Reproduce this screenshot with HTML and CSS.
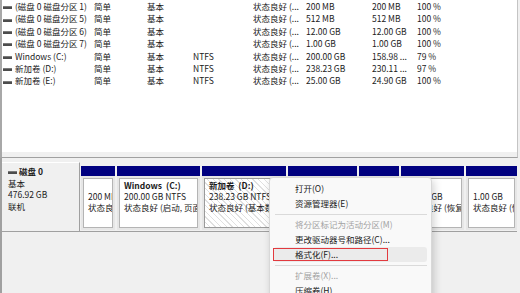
FILE: index.html
```
<!DOCTYPE html>
<html lang="zh-CN">
<head>
  <meta charset="UTF-8" />
  <title>磁盘管理</title>
  <link rel="stylesheet" href="styles.css">
</head>
<body>
  <div class="window">

    <!-- Volume list -->
    <div class="volume-list">
      <div class="rows">
        <div class="row"><span class="name"><i class="vol-icon"></i>(磁盘 0 磁盘分区 1)</span><span>简单</span><span>基本</span><span></span><span>状态良好 (...</span><span>200 MB</span><span>200 MB</span><span>100 %</span></div>
        <div class="row"><span class="name"><i class="vol-icon"></i>(磁盘 0 磁盘分区 5)</span><span>简单</span><span>基本</span><span></span><span>状态良好 (...</span><span>512 MB</span><span>512 MB</span><span>100 %</span></div>
        <div class="row"><span class="name"><i class="vol-icon"></i>(磁盘 0 磁盘分区 6)</span><span>简单</span><span>基本</span><span></span><span>状态良好 (...</span><span>12.00 GB</span><span>12.00 GB</span><span>100 %</span></div>
        <div class="row"><span class="name"><i class="vol-icon"></i>(磁盘 0 磁盘分区 7)</span><span>简单</span><span>基本</span><span></span><span>状态良好 (...</span><span>1.00 GB</span><span>1.00 GB</span><span>100 %</span></div>
        <div class="row"><span class="name"><i class="vol-icon"></i>Windows (C:)</span><span>简单</span><span>基本</span><span>NTFS</span><span>状态良好 (...</span><span>200.00 GB</span><span>158.98 ...</span><span>79 %</span></div>
        <div class="row"><span class="name"><i class="vol-icon"></i>新加卷 (D:)</span><span>简单</span><span>基本</span><span>NTFS</span><span>状态良好 (...</span><span>238.23 GB</span><span>230.11 ...</span><span>97 %</span></div>
        <div class="row"><span class="name"><i class="vol-icon"></i>新加卷 (E:)</span><span>简单</span><span>基本</span><span>NTFS</span><span>状态良好 (...</span><span>25.00 GB</span><span>24.90 GB</span><span>100 %</span></div>
      </div>
      <div class="hscroll"></div>
    </div>

    <!-- Disk map -->
    <div class="disk-area">
      <div class="disk-row">
        <div class="disk-label">
          <div class="disk-name"><i class="vol-icon"></i>磁盘 0</div>
          <div>基本</div>
          <div>476.92 GB</div>
          <div>联机</div>
        </div>
        <div class="partitions">
          <div class="part p-efi">
            <div class="part-head"></div>
            <div class="part-body"><div class="part-box"><b>&nbsp;</b><br>200 MB<br>状态良好 (EFI 系统分区)</div></div>
          </div>
          <div class="part p-c">
            <div class="part-head"></div>
            <div class="part-body"><div class="part-box"><b>Windows&nbsp; (C:)</b><br>200.00 GB NTFS<br>状态良好 (启动, 页面文件, 故障转储, 基本数据分区)</div></div>
          </div>
          <div class="part p-d">
            <div class="part-head"></div>
            <div class="part-body"><div class="part-box selected"><b>新加卷&nbsp; (D:)</b><br>238.23 GB NTFS<br>状态良好 (基本数据分区)</div></div>
          </div>
          <div class="part p-e">
            <div class="part-head"></div>
            <div class="part-body"><div class="part-box"><b>新加卷&nbsp; (E:)</b><br>25.00 GB NTFS<br>状态良好 (基本数据分区)</div></div>
          </div>
          <div class="part p-512">
            <div class="part-head"></div>
            <div class="part-body"><div class="part-box"><b>&nbsp;</b><br>512 MB<br>状态良好 (恢复分区)</div></div>
          </div>
          <div class="part p-12">
            <div class="part-head"></div>
            <div class="part-body"><div class="part-box"><b>&nbsp;</b><br>12.00 GB<br>状态良好 (恢复分区)</div></div>
          </div>
          <div class="part p-1">
            <div class="part-head"></div>
            <div class="part-body"><div class="part-box"><b>&nbsp;</b><br>1.00 GB<br>状态良好 (恢复分区)</div></div>
          </div>
        </div>
      </div>
    </div>

    <!-- Context menu -->
    <div class="context-menu">
      <div class="menu-item">打开(O)</div>
      <div class="menu-item">资源管理器(E)</div>
      <div class="menu-sep"></div>
      <div class="menu-item disabled">将分区标记为活动分区(M)</div>
      <div class="menu-item">更改驱动器号和路径(C)...</div>
      <div class="menu-item hover">格式化(F)...<span class="mark"></span></div>
      <div class="menu-sep"></div>
      <div class="menu-item disabled">扩展卷(X)...</div>
      <div class="menu-item">压缩卷(H)</div>
    </div>

  </div>
</body>
</html>
```

FILE: styles.css
```
:root {
  --bg: #f0f0f0;
  --border: #a0a0a0;
  --text: #1b1b1b;
  --navy: #000080;
}

* {
  box-sizing: border-box;
  margin: 0;
  padding: 0;
}

body {
  font-family: "Noto Sans CJK SC", "Noto Sans", sans-serif;
  font-size: 8.5px;
  color: var(--text);
  background: var(--bg);
}

.window {
  position: relative;
  width: 520px;
  height: 293px;
  overflow: hidden;
}

/* volume list */
.volume-list {
  width: 518px;
  height: 158px;
  display: flex;
  flex-direction: column;
  background: #fff;
  border-left: 2px solid #a8a8a8;
  border-right: 1px solid #c4c4c4;
  border-bottom: 1px solid var(--border);
}

.rows {
  flex: 1;
}

.row {
  display: grid;
  grid-template-columns: 92px 53px 46px 60px 53px 66px 45px 1fr;
  height: 12.4px;
  line-height: 12.4px;
  white-space: nowrap;
}

.row span {
  overflow: hidden;
}

.name {
  padding-left: 1px;
}

.vol-icon {
  display: inline-block;
  width: 9px;
  height: 3px;
  margin-right: 3px;
  vertical-align: middle;
  background: #4c4c4c;
  border-top: 1px solid #7a7a7a;
}

.hscroll {
  height: 5px;
  background: var(--bg);
}

/* disk map */
.disk-area {
  width: 517px;
  height: 135px;
  padding-top: 4px;
  border-left: 2px solid var(--border);
}

.disk-row {
  display: flex;
  height: 70px;
  border-bottom: 1px solid var(--border);
}

.disk-label {
  width: 78px;
  padding: 3px 0 0 6px;
  line-height: 11.7px;
  background: var(--bg);
  border-top: 1px solid #fff;
  border-right: 1px solid var(--border);
}

.disk-name {
  font-weight: bold;
}

.disk-name .vol-icon {
  margin-right: 2px;
}

.partitions {
  display: flex;
  gap: 2px;
  margin-left: 1px;
  padding: 4px 0 1px;
}

.part {
  display: flex;
  flex-direction: column;
}

.p-efi { width: 34px; }
.p-c { width: 83px; }
.p-d { width: 84px; }
.p-e { width: 69px; }
.p-512 { width: 40px; }
.p-12 { width: 63px; }
.p-1 { width: 51px; }

.part-head {
  height: 10px;
  background: var(--navy);
}

.part-body {
  flex: 1;
  padding: 2px;
  background: #e6e6e6;
}

.part-box {
  height: 100%;
  padding: 1px 2px 0 4px;
  line-height: 11px;
  white-space: nowrap;
  overflow: hidden;
  background: #fff;
  border: 1px solid #b4b4b4;
}

.part-box.selected {
  border-color: #9a9a9a;
  background: repeating-linear-gradient(45deg, #fff 0 3px, #e0e0e0 3px 4px);
}

/* context menu */
.context-menu {
  position: absolute;
  left: 269px;
  top: 177px;
  width: 163px;
  padding: 3px 4px;
  background: #f9f9f9;
  border: 1px solid #d8d8d8;
  border-radius: 4px;
  box-shadow: 2px 3px 8px rgba(0, 0, 0, 0.18);
  color: #1a1a1a;
}

.menu-item {
  position: relative;
  height: 15px;
  line-height: 15px;
  padding-left: 21px;
  border-radius: 3px;
  white-space: nowrap;
}

.menu-item.disabled {
  color: #a3a3a3;
}

.menu-item.hover {
  background: #ebebeb;
}

.menu-sep {
  height: 1px;
  margin: 2.5px 0 2.5px 1px;
  background: #dadada;
}

.mark {
  position: absolute;
  left: -1px;
  top: 1px;
  width: 115px;
  height: 13px;
  border: 1.5px solid #e23a3f;
}
```
